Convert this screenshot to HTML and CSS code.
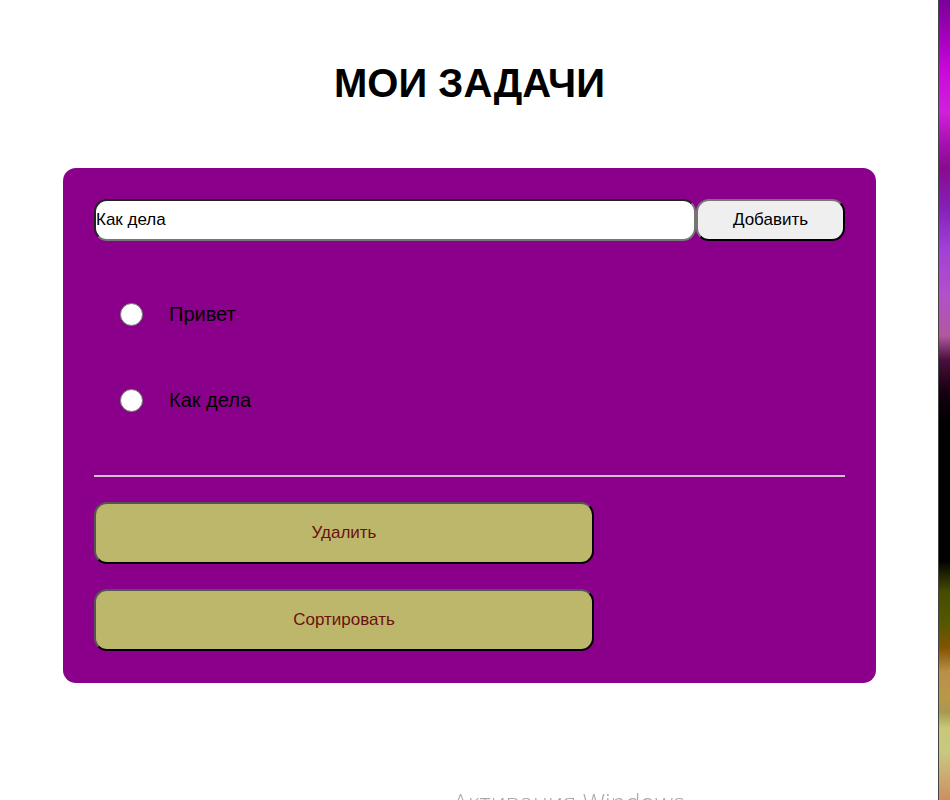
FILE: index.html
```html
<!DOCTYPE html>
<html lang="ru">
<head>
<meta charset="utf-8">
<title>Мои задачи</title>
<link rel="stylesheet" href="styles.css">
</head>
<body>
<main class="page">
  <h1 class="title">МОИ ЗАДАЧИ</h1>
  <section class="panel">
    <form class="add-form">
      <input class="task-input" type="text" value="Как дела" aria-label="Новая задача">
      <button class="add-button" type="button">Добавить</button>
    </form>
    <ul class="tasks">
      <li><label class="task"><input class="task-radio" type="radio" name="task-1">Привет</label></li>
      <li><label class="task"><input class="task-radio" type="radio" name="task-2">Как дела</label></li>
    </ul>
    <div class="actions">
      <button class="action" type="button">Удалить</button>
      <button class="action" type="button">Сортировать</button>
    </div>
  </section>
</main>
<div class="wallpaper"></div>
<p class="watermark">Активация Windows</p>
</body>
</html>
```

FILE: styles.css
```css
* {
  box-sizing: border-box;
}

body {
  margin: 0;
  display: flex;
  height: 100vh;
  overflow: hidden;
  background: #fff;
  font-family: "Liberation Sans", Arial, sans-serif;
  font-size: 17px;
}

.page {
  flex: 1;
  padding: 58px 62px 0 63px;
}

.title {
  margin: 0 0 60px;
  font-size: 40px;
  line-height: 50px;
  text-align: center;
}

.panel {
  padding: 31px 31px 32px;
  border-radius: 13px;
  background: #8b008b;
}

.add-form {
  display: flex;
}

.task-input,
.add-button,
.action {
  margin: 0;
  border-width: 2px;
  border-radius: 13px;
  font-family: inherit;
  font-size: 17px;
}

.task-input {
  flex: 1;
  min-width: 0;
  height: 42px;
  padding: 0;
  border-style: solid;
  border-color: #222 #767676 #767676 #222;
  background: #fff;
  color: #000;
}

.add-button {
  flex: 0 0 149px;
  padding: 0;
  border-style: solid;
  border-color: #767676 #000 #000 #767676;
  background: #efefef;
  color: #000;
}

.tasks {
  margin: 0;
  padding: 30px 26px 32px;
  border-bottom: 2px solid #d3c0d3;
  list-style: none;
}

.task {
  display: flex;
  align-items: center;
  gap: 26px;
  height: 86px;
  font-size: 20px;
  color: #000;
}

.task-radio {
  appearance: none;
  width: 23px;
  height: 23px;
  margin: 0;
  border: 1px solid #767676;
  border-radius: 50%;
  background: #fff;
}

.task-radio:checked {
  border: 6px solid #0075ff;
}

.actions {
  display: flex;
  flex-direction: column;
  gap: 25px;
  width: 500px;
  max-width: 100%;
  padding-top: 25px;
}

.action {
  height: 62px;
  padding: 0;
  border-style: solid;
  border-color: #555 #000 #000 #555;
  background: #bdb76b;
  color: #6b1010;
}

.wallpaper {
  width: 12px;
  border-left: 1px solid #444;
  background: linear-gradient(#7a0099 0%, #a800c0 5%, #cc08dc 9%, #d020dc 14%, #a510b0 18%, #8a0a90 21%, #8420b8 26%, #a040d8 31%, #b450c8 37%, #b058a0 42%, #48103c 45%, #160010 49%, #000 53%, #000 70%, #464c00 74%, #545800 78%, #845400 81%, #b89048 84%, #b89848 87%, #a89850 89%, #c8c878 91%, #c8c880 94%, #cc9868 99%, #cc9060 100%);
}

.watermark {
  position: fixed;
  bottom: -20px;
  left: 453px;
  margin: 0;
  font-family: "Open Sans", "Noto Sans", sans-serif;
  font-size: 25px;
  font-weight: 300;
  line-height: 36px;
  white-space: nowrap;
  color: #aaa;
}
```
